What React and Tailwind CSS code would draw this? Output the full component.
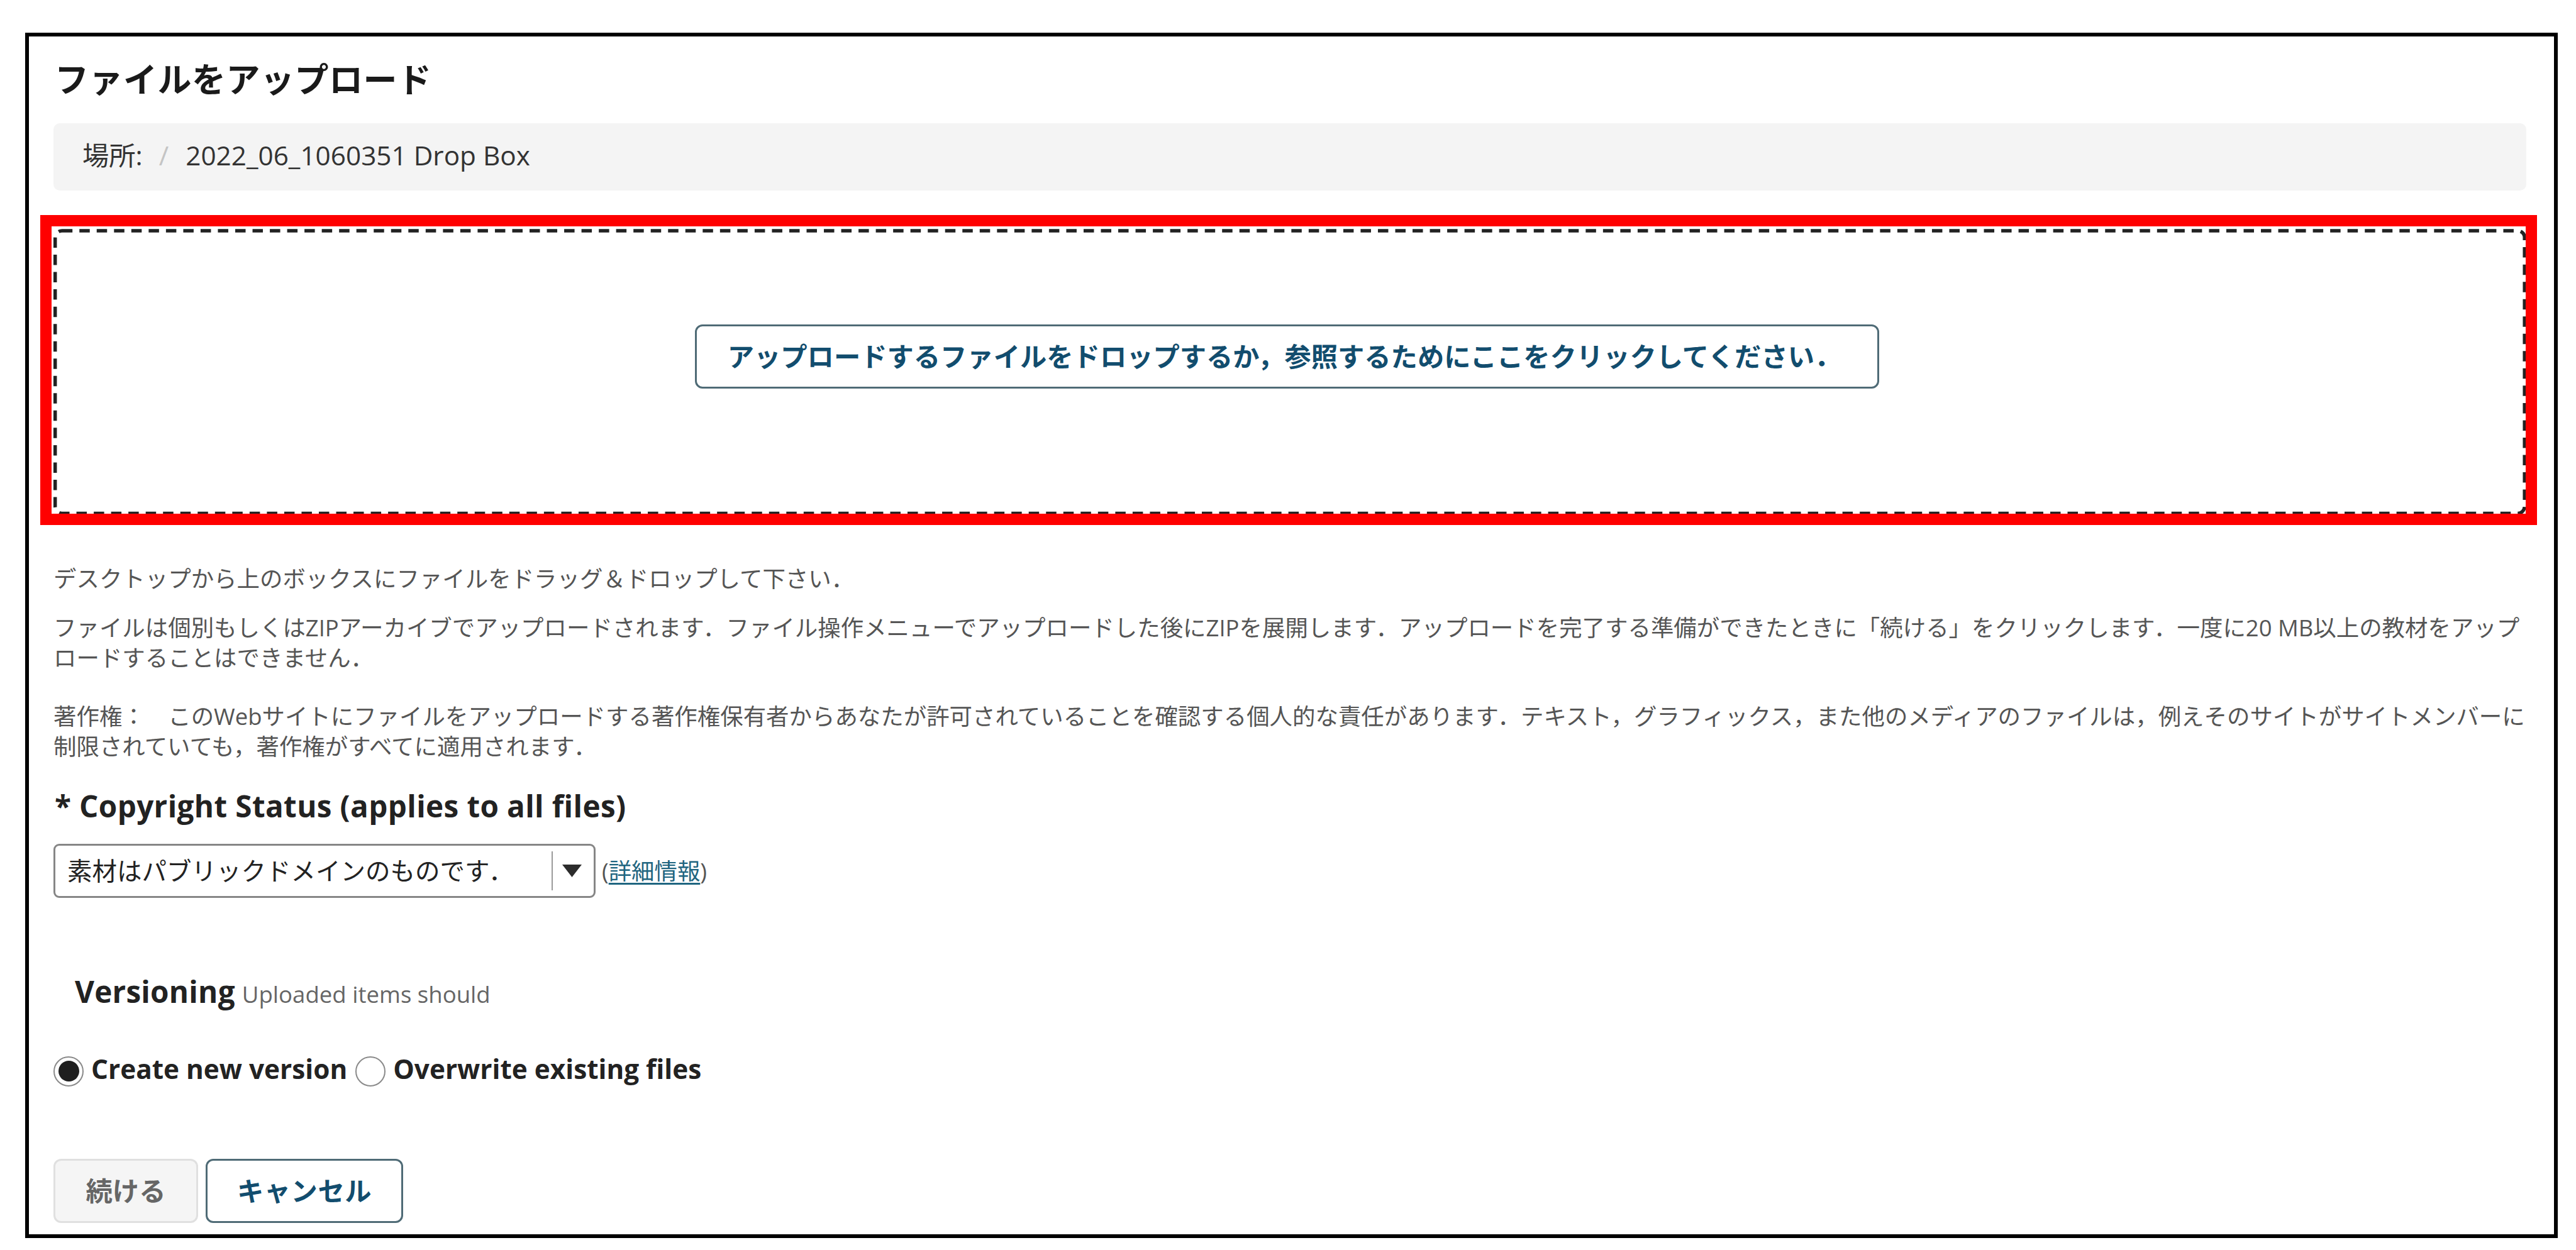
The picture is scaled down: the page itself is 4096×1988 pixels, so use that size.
import React from "react";

const paragraphs = [
  ["デスクトップから上のボックスにファイルをドラッグ＆ドロップして下さい．"],
  [
    "ファイルは個別もしくはZIPアーカイブでアップロードされます．ファイル操作メニューでアップロードした後にZIPを展開します．アップロードを完了する準備ができたときに「続ける」をクリックします．一度に20 MB以上の教材をアップ",
    "ロードすることはできません．",
  ],
  [
    "著作権：　このWebサイトにファイルをアップロードする著作権保有者からあなたが許可されていることを確認する個人的な責任があります．テキスト，グラフィックス，また他のメディアのファイルは，例えそのサイトがサイトメンバーに",
    "制限されていても，著作権がすべてに適用されます．",
  ],
];

function Paragraph({ lines, className }) {
  return (
    <p className={"text-[36.45px] leading-[48.5px] text-[#555555] whitespace-nowrap " + className}>
      {lines.map((line) => (
        <span key={line} className="block">{line}</span>
      ))}
    </p>
  );
}

function Radio({ checked }) {
  return (
    <span className="flex size-[48px] shrink-0 items-center justify-center rounded-full border-[2.5px] border-[#8a8a8a] bg-white">
      {checked && <span className="size-[33px] rounded-full bg-[#1f1f1f]" />}
    </span>
  );
}

export default function App() {
  return (
    <div className="h-[1988px] w-[4096px] overflow-hidden bg-white pt-[52px] pl-[40px] font-['Open_Sans','Noto_Sans_CJK_JP',sans-serif] text-[#222222]">
      <main className="h-[1917px] w-[4027px] border-[6px] border-black pt-[36px] pl-[39px]">
        <h1 className="h-[102px] pl-[2px] text-[54px] leading-[64px] font-bold tracking-[0.5px] whitespace-nowrap text-[#1a1a1a]">ファイルをアップロード</h1>

        <nav className="flex h-[107px] w-[3932px] items-center rounded-[10px] bg-[#f4f4f4] pb-[6px] pl-[46px] text-[42.3px] leading-[56px] whitespace-nowrap text-[#333333]">
          <span>場所:</span>
          <span className="ml-[26px] text-[#c4c4c4]">/</span>
          <span className="ml-[27px]">2022_06_1060351 Drop Box</span>
        </nav>

        <section className="relative mt-[39px] -ml-[21px] flex h-[493px] w-[3970px] justify-center border-[18px] border-[#ff0000] pt-[156px]">
          <svg className="absolute top-0 left-0" width="3934" height="457" viewBox="0 0 3934 457" fill="none">
            <rect x="5.7" y="7" width="3926.5" height="449.5" rx="11" stroke="#222222" strokeWidth="5.5" strokeDasharray="16.5 11.03" />
          </svg>
          <button className="-ml-[5px] h-[102px] w-[1883px] rounded-[12px] border-[3px] border-[#4f6b76] bg-white pr-[9px] text-[42.3px] leading-[60px] font-bold whitespace-nowrap text-[#124d6e]">
            アップロードするファイルをドロップするか，参照するためにここをクリックしてください．
          </button>
        </section>

        <Paragraph lines={paragraphs[0]} className="mt-[61px]" />
        <Paragraph lines={paragraphs[1]} className="mt-[29px]" />
        <Paragraph lines={paragraphs[2]} className="mt-[44px]" />

        <h2 className="mt-[38px] pl-[2px] text-[47.6px] leading-[64px] font-bold tracking-[0.39px] whitespace-nowrap">* Copyright Status (applies to all files)</h2>

        <div className="mt-[28px] flex items-center whitespace-nowrap">
          <div className="flex h-[86px] w-[862px] items-center rounded-[9px] border-[3px] border-[#868686] bg-white pl-[19px] text-[39.5px] leading-[56px]">
            <span className="w-[770px]">素材はパブリックドメインのものです．</span>
            <span className="h-[62px] w-[2px] bg-[#9a9a9a]" />
            <svg className="ml-[15px]" width="31" height="20" viewBox="0 0 31 20">
              <path d="M0 0H31L15.5 20Z" fill="#2c2c2c" />
            </svg>
          </div>
          <span className="ml-[10px] text-[36.4px] leading-[50px] text-[#555555]">
            (<a className="text-[#1f6580] underline decoration-[2.6px] underline-offset-[5px]">詳細情報</a>)
          </span>
        </div>

        <div className="mt-[117px] flex items-baseline pl-[34px] whitespace-nowrap">
          <h2 className="text-[47.6px] leading-[64px] font-bold tracking-[0.25px]">Versioning</h2>
          <span className="ml-[11px] text-[36.6px] leading-[50px] text-[#666666]">Uploaded items should</span>
        </div>

        <div className="mt-[65px] flex h-[60px] items-center text-[42.3px] leading-[60px] font-bold whitespace-nowrap">
          <Radio checked />
          <span className="ml-[12px] pb-[7px]">Create new version</span>
          <span className="ml-[13px] flex"><Radio /></span>
          <span className="ml-[12px] pb-[7px]">Overwrite existing files</span>
        </div>

        <div className="mt-[109px] flex gap-[12px] text-[42.3px] leading-[60px] font-bold whitespace-nowrap">
          <button className="h-[102px] w-[230px] rounded-[12px] border-[3px] border-[#e0e0e0] bg-[#f5f5f5] text-[#666666]">続ける</button>
          <button className="h-[102px] w-[314px] rounded-[12px] border-[3px] border-[#4f6b76] bg-white tracking-[0.5px] text-[#124d6e]">キャンセル</button>
        </div>
      </main>
    </div>
  );
}
